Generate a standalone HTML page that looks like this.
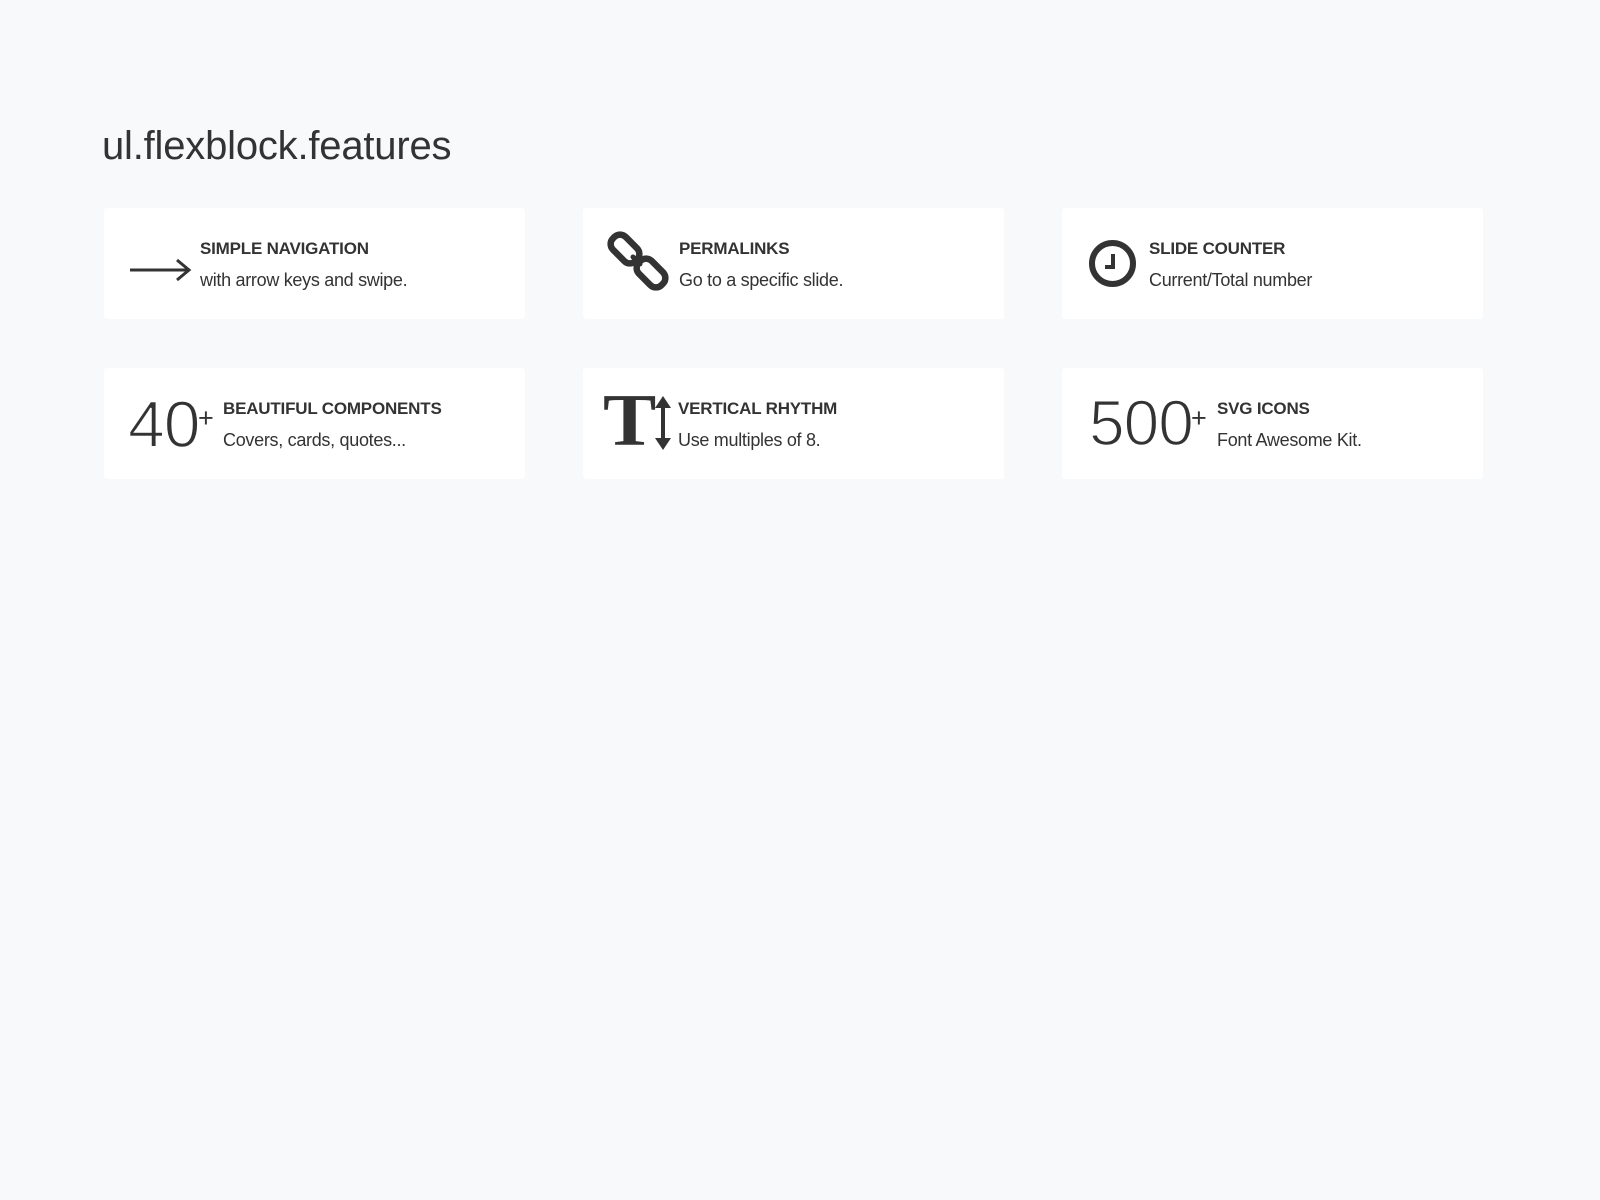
<!DOCTYPE html>
<html><head><meta charset="utf-8"><style>
*{margin:0;padding:0;box-sizing:border-box}
body{width:1600px;height:1200px;background:#f7f9fb;font-family:"Liberation Sans",sans-serif;color:#333;position:relative;overflow:hidden}
.t{position:absolute;white-space:nowrap}
h1{position:absolute;left:102px;top:124px;font-size:40px;font-weight:normal;color:#333;letter-spacing:-0.2px;white-space:nowrap}
.card{position:absolute;background:#fff;border-radius:3px;width:421px;height:111px}
.h{font-size:17px;font-weight:bold;letter-spacing:-0.2px}
.s{font-size:18px;letter-spacing:-0.3px}
.big{font-weight:300;letter-spacing:-1px;line-height:1;-webkit-text-stroke:1.6px #fff}
</style></head><body>
<h1>ul.flexblock.features</h1>

<div class="card" style="left:104px;top:208px"></div>
<div class="card" style="left:583px;top:208px"></div>
<div class="card" style="left:1062px;top:208px"></div>
<div class="card" style="left:104px;top:368px"></div>
<div class="card" style="left:583px;top:368px"></div>
<div class="card" style="left:1062px;top:368px"></div>

<svg width="1600" height="1200" style="position:absolute;left:0;top:0">
  <path d="M130 270 H188 M177 260 L189 270 L177 280" fill="none" stroke="#333" stroke-width="3"/>
  <g fill="none" stroke="#333" stroke-width="6.5">
    <rect x="609" y="240" width="32" height="18" rx="8" transform="rotate(45 625 249)"/>
    <rect x="635" y="264" width="32" height="18" rx="8" transform="rotate(45 651 273)"/>
  </g>
  <path d="M633 257 L640 264" stroke="#333" stroke-width="5" stroke-linecap="round"/>
  <circle cx="1112.5" cy="263.5" r="20.5" fill="none" stroke="#333" stroke-width="6"/>
  <path d="M1113 254 V267 H1105" fill="none" stroke="#333" stroke-width="4"/>
  <path d="M663 402 V444" stroke="#333" stroke-width="4"/>
  <path d="M655 408 L663 396 L671 408 Z M655 438 L663 450 L671 438 Z" fill="#333"/>
</svg>

<div class="t h" style="left:200px;top:239px">SIMPLE NAVIGATION</div>
<div class="t s" style="left:200px;top:270px">with arrow keys and swipe.</div>

<div class="t h" style="left:679px;top:239px">PERMALINKS</div>
<div class="t s" style="left:679px;top:270px">Go to a specific slide.</div>

<div class="t h" style="left:1149px;top:239px">SLIDE COUNTER</div>
<div class="t s" style="left:1149px;top:270px">Current/Total number</div>

<div class="t big" style="left:128px;top:391px;font-size:66px">40</div>
<div class="t" style="left:198px;top:403px;font-size:27px;font-weight:300">+</div>
<div class="t h" style="left:223px;top:399px">BEAUTIFUL COMPONENTS</div>
<div class="t s" style="left:223px;top:430px">Covers, cards, quotes...</div>

<div class="t" style="left:603px;top:384px;font-family:'Liberation Serif',serif;font-size:74px;font-weight:bold;line-height:1;transform:scaleX(1.08);transform-origin:left top">T</div>
<div class="t h" style="left:678px;top:399px">VERTICAL RHYTHM</div>
<div class="t s" style="left:678px;top:430px">Use multiples of 8.</div>

<div class="t big" style="left:1089px;top:391px;font-size:64px">500</div>
<div class="t" style="left:1191px;top:403px;font-size:27px;font-weight:300">+</div>
<div class="t h" style="left:1217px;top:399px">SVG ICONS</div>
<div class="t s" style="left:1217px;top:430px">Font Awesome Kit.</div>
</body></html>
